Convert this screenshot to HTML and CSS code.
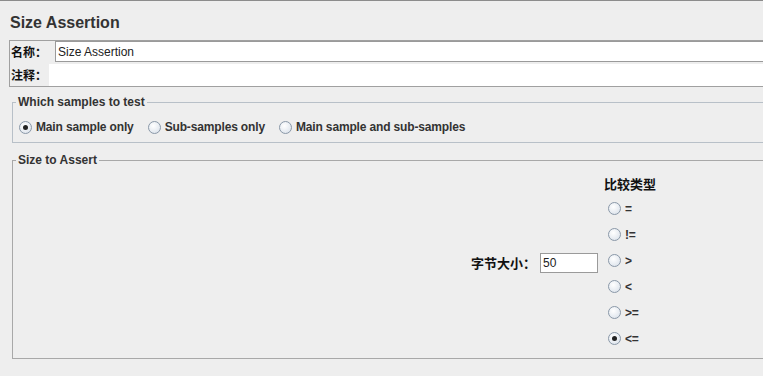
FILE: index.html
```html
<!DOCTYPE html>
<html lang="zh-CN">
<head>
    <meta charset="UTF-8">
    <meta name="viewport" content="width=device-width, initial-scale=1.0">
    <title>Size Assertion</title>
    <link rel="stylesheet" href="styles.css">
</head>
<body>
    <div class="page">
        <h1 class="title">Size Assertion</h1>

        <div class="name-panel">
            <label class="name-label">名称：</label>
            <div class="name-field">Size Assertion</div>
            <label class="name-label">注释：</label>
            <div class="comment-field"></div>
        </div>

        <fieldset class="group samples">
            <legend>Which samples to test</legend>
            <div class="radio-row">
                <span class="radio checked"></span><span class="radio-text">Main sample only</span>
                <span class="radio"></span><span class="radio-text">Sub-samples only</span>
                <span class="radio"></span><span class="radio-text">Main sample and sub-samples</span>
            </div>
        </fieldset>

        <fieldset class="group size">
            <legend>Size to Assert</legend>
            <div class="size-body">
                <span class="size-label">字节大小：</span>
                <div class="size-field">50</div>
                <div class="compare">
                    <div class="compare-title">比较类型</div>
                    <div class="compare-item"><span class="radio"></span><span class="radio-text">=</span></div>
                    <div class="compare-item"><span class="radio"></span><span class="radio-text">!=</span></div>
                    <div class="compare-item"><span class="radio"></span><span class="radio-text">&gt;</span></div>
                    <div class="compare-item"><span class="radio"></span><span class="radio-text">&lt;</span></div>
                    <div class="compare-item"><span class="radio"></span><span class="radio-text">&gt;=</span></div>
                    <div class="compare-item"><span class="radio checked"></span><span class="radio-text">&lt;=</span></div>
                </div>
            </div>
        </fieldset>
    </div>
</body>
</html>
```

FILE: styles.css
```css
html, body {
    margin: 0;
    padding: 0;
    height: 100%;
    overflow: hidden;
}

body {
    background-color: #EEEEEE;
    font-family: "Liberation Sans", Arial, "Noto Sans CJK SC", sans-serif;
    font-size: 12px;
    color: #333333;
}

.page {
    border-top: 1px solid #8C8C8C;
    width: 800px;
}

.title {
    margin: 0;
    padding: 13px 0 0 10px;
    height: 26px;
    font-size: 16px;
    font-weight: bold;
    color: #333333;
}

/* name / comment box */
.name-panel {
    margin-left: 9px;
    border: 1px solid #A0A0A0;
    display: grid;
    grid-template-columns: 40px 1fr;
    grid-template-rows: 21px 24px;
}

.name-label {
    font-family: "Noto Sans CJK SC", sans-serif;
    font-weight: bold;
    font-size: 12px;
    color: #111111;
    padding-left: 1px;
    display: flex;
    align-items: center;
}

.name-field {
    margin-left: 5px;
    border: 1px solid #9A9A9A;
    border-right: none;
    background-color: white;
    padding: 1px 0 0 2px;
    line-height: 18px;
    color: #222222;
}

.comment-field {
    margin: 2px 0 0 -1px;
    background-color: white;
}

/* titled groups */
.group {
    margin: 0 0 0 12px;
    padding: 0;
    border: 1px solid #B8C0C8;
    border-right: none;
}

.group legend {
    margin-left: 3px;
    padding: 0 2px 0 2px;
    font-weight: bold;
    font-size: 12px;
    color: #333333;
}

.samples {
    margin-top: 8px;
    height: 46px;
}

.radio-row {
    display: flex;
    align-items: center;
    padding: 11px 0 0 6px;
}

.radio {
    width: 11px;
    height: 11px;
    border: 1px solid #8A98A8;
    border-radius: 50%;
    background: radial-gradient(circle at 40% 35%, #FFFFFF, #D6DEE8);
    position: relative;
    flex: none;
}

.radio.checked::after {
    content: "";
    position: absolute;
    left: 3px;
    top: 3px;
    width: 5px;
    height: 5px;
    border-radius: 50%;
    background-color: #222222;
}

.radio-text {
    font-weight: bold;
    letter-spacing: -0.15px;
    margin-left: 4px;
    margin-right: 14px;
    color: #333333;
}

.size {
    margin-top: 10px;
    height: 204px;
    border-color: #A8A8A8;
}

.size-body {
    display: flex;
    align-items: center;
    padding-left: 458px;
    height: 100%;
}

.size-label {
    font-family: "Noto Sans CJK SC", sans-serif;
    font-weight: bold;
    font-size: 13px;
    color: #111111;
}

.size-field {
    width: 54px;
    height: 18px;
    margin-left: 4px;
    border: 1px solid #9A9A9A;
    background-color: white;
    padding-left: 2px;
    line-height: 18px;
    color: #222222;
}

.compare {
    margin-left: 6px;
    display: flex;
    flex-direction: column;
}

.compare-title {
    font-family: "Noto Sans CJK SC", sans-serif;
    font-weight: bold;
    font-size: 13px;
    color: #111111;
    height: 22px;
}

.compare-item {
    display: flex;
    align-items: center;
    height: 26px;
    padding-left: 4px;
}
```
